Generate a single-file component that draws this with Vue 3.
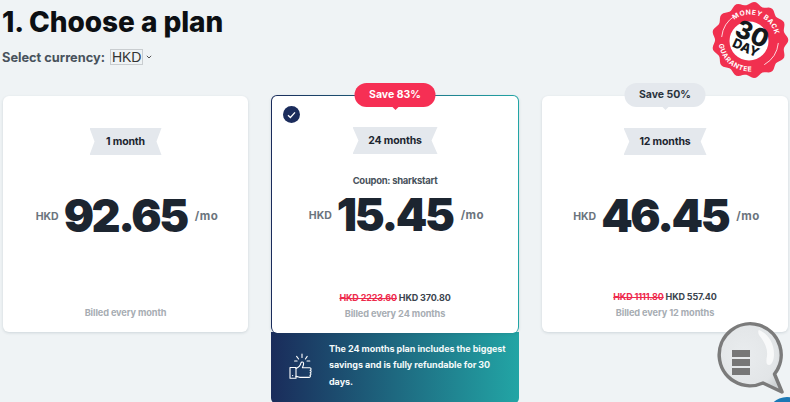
<script setup>
const plans = [
  { id: 1, term: '1 month', price: '92.65', billed: 'Billed every month' },
  { id: 2, term: '24 months', price: '15.45', billed: 'Billed every 24 months', save: 'Save 83%', coupon: 'Coupon: sharkstart', old: 'HKD 2223.60', now: 'HKD 370.80', selected: true },
  { id: 3, term: '12 months', price: '46.45', billed: 'Billed every 12 months', save: 'Save 50%', old: 'HKD 1111.80', now: 'HKD 557.40' }
]
const cx = 39, cy = 40
const pt = (r, deg) => {
  const a = (deg * Math.PI) / 180
  return (cx + r * Math.cos(a)).toFixed(2) + ' ' + (cy + r * Math.sin(a)).toFixed(2)
}
const arc = (r, from, to) => {
  const sweep = to > from ? 1 : 0
  const large = Math.abs(to - from) > 180 ? 1 : 0
  return `M${pt(r, from)}A${r} ${r} 0 ${large} ${sweep} ${pt(r, to)}`
}
let d = ''
for (let i = 0; i < 360; i += 3) {
  d += (i ? 'L' : 'M') + pt(36.6 + 1.7 * Math.cos((13 * i * Math.PI) / 180), i)
}
const sealPath = d + 'Z'
const topArc = arc(25.5, -128, 8)
const botArc = arc(31.5, 172, 55)
const lineA = arc(28.5, -174, -122)
const lineB = arc(28.5, 6, 60)
</script>

<template>
  <main class="page">
    <h1 class="title">1. Choose a plan</h1>
    <div class="currency">
      <span class="currency-label">Select currency:</span>
      <span class="currency-box">HKD</span>
      <svg class="chev" width="6" height="4" viewBox="0 0 6 4"><path d="M.8.8 3 3l2.2-2.2" fill="none" stroke="#555" stroke-width="1"/></svg>
    </div>

    <section class="plans">
      <article v-for="p in plans" :key="p.id" class="plan" :class="{ selected: p.selected }">
        <div class="card">
          <span v-if="p.save" class="save">{{ p.save }}</span>
          <span v-if="p.selected" class="check">
            <svg width="9" height="8" viewBox="0 0 9 8"><path d="M1 4.200 3.400 6.500 8 1.400" fill="none" stroke="#fff" stroke-width="1.300"/></svg>
          </span>
          <div class="ribbon"><span>{{ p.term }}</span></div>
          <div class="coupon">{{ p.coupon }}</div>
          <div class="price">
            <span class="cur">HKD</span>
            <span class="amount">{{ p.price }}</span>
            <span class="per">/mo</span>
          </div>
          <div class="bill">
            <div v-if="p.old" class="totals"><s>{{ p.old }}</s> {{ p.now }}</div>
            <div class="billed">{{ p.billed }}</div>
          </div>
        </div>
        <div v-if="p.selected" class="promo">
          <svg class="thumb" width="24" height="28" viewBox="0 0 24 28" fill="none" stroke="#fff" stroke-width="1.100" stroke-linecap="round" stroke-linejoin="round">
            <path d="M1 14.500h6v10.800H1z"/>
            <circle cx="3.600" cy="22.600" r=".7" fill="#fff" stroke="none"/>
            <path d="M7 15.500c2.500-1 4.400-3.200 5-5.600.3-1.300 2.500-1.100 2.600.6.1 1.600-.7 3.100-1.200 4.200h7.400c1.500 0 1.800 2.300.3 2.600 1.400.3 1.300 2.300 0 2.500 1.200.4 1 2.200-.2 2.400.9.5.6 2.200-.7 2.200h-8c-2 0-3-.9-5.200-1"/>
            <path d="M13 1v3.400M7.600 3.400 9.600 6M18.200 3.400 16.400 6M5.600 8h2.500M18 8h2.800"/>
          </svg>
          <p>The 24 months plan includes the biggest savings and is fully refundable for 30 days.</p>
        </div>
      </article>
    </section>

    <svg class="seal" width="80" height="80" viewBox="0 0 80 80" aria-label="Money back guarantee">
      <defs>
        <path id="arcTop" :d="topArc"/>
        <path id="arcBot" :d="botArc"/>
      </defs>
      <path :d="sealPath" fill="#f1304f"/>
      <path :d="lineA" fill="none" stroke="#fff" stroke-width=".8"/>
      <path :d="lineB" fill="none" stroke="#fff" stroke-width=".8"/>
      <circle cx="38" cy="41" r="19.500" fill="#fff"/>
      <text class="seal-arc"><textPath href="#arcTop">MONEY BACK</textPath></text>
      <text class="seal-arc"><textPath href="#arcBot">GUARANTEE</textPath></text>
      <g transform="rotate(24 38 41)">
        <text x="38" y="42" class="seal-30">30</text>
        <text x="38" y="53" class="seal-day">DAY</text>
      </g>
    </svg>

    <svg class="lens" width="70" height="74" viewBox="0 0 70 74">
      <defs>
        <radialGradient id="glass" cx=".4" cy=".45" r=".65">
          <stop offset="0" stop-color="#e9ecee"/>
          <stop offset=".8" stop-color="#e2e5e7"/>
          <stop offset="1" stop-color="#cfd3d5"/>
        </radialGradient>
      </defs>
      <path d="M46 62A31 31 0 1 1 57.500 53L65 71Z" fill="url(#glass)" stroke="#7b7b7b" stroke-width="3.500" stroke-linejoin="round"/>
      <path d="M42 9c9 4 15 13 15 24 0 6-2 11-5 11-3 0-3-4-2-9 1-8-3-15-8-21-1-2-1-5 0-5Z" fill="#fff" opacity=".75"/>
      <path d="M15 29h18v7H15zM15 38h18v7H15zM15 47h18v7H15z" fill="#777"/>
    </svg>
    <span class="corner"></span>
  </main>
</template>

<style>
html, body { margin: 0; background: #eff3f5; }
</style>

<style scoped>
.page {
  position: relative;
  width: 790px;
  height: 402px;
  overflow: hidden;
  box-sizing: border-box;
  padding: 4px 0 0 2px;
  background: #eff3f5;
  font-family: Inter, "Open Sans", sans-serif;
  color: #1c2530;
}
.title {
  margin: 0;
  font-size: 28px;
  line-height: 36px;
  font-weight: 800;
  letter-spacing: -.05px;
  color: #0c0f13;
}
.currency {
  display: flex;
  align-items: center;
  height: 20px;
  margin-top: 7px;
}
.currency-label { font-size: 12.800px; font-weight: 700; color: #48525c; }
.currency-box {
  margin-left: 5px;
  padding: 0 1px;
  border: 1px solid #c9cdd0;
  font: 14px/14px "Liberation Sans", sans-serif;
  color: #333;
}
.chev { margin-left: 3px; }
.plans {
  display: grid;
  grid-template-columns: 245px 248px 246px;
  column-gap: 23px;
  margin: 29px 0 0 1px;
  align-items: start;
}
.plan { position: relative; }
.card {
  position: relative;
  box-sizing: border-box;
  height: 236px;
  display: flex;
  flex-direction: column;
  align-items: center;
  background: #fff;
  border-radius: 6px;
  box-shadow: 0 1px 3px rgba(40, 60, 80, .16);
}
.selected { margin-top: -1px; }
.selected .card {
  height: 238px;
  border: 1.500px solid transparent;
  background: linear-gradient(#fff, #fff) padding-box, linear-gradient(90deg, #1a2c5b, #22a5a5) border-box;
  border-bottom: 0;
  margin-bottom: -1px;
  z-index: 1;
}
.save {
  position: absolute;
  top: -13px;
  left: 50%;
  transform: translateX(-50%);
  box-sizing: border-box;
  width: 81px;
  height: 24px;
  border-radius: 12px;
  background: #e4e8ed;
  border-color: #e4e8ed;
  color: #2a333d;
  font-size: 10.500px;
  font-weight: 700;
  line-height: 24px;
  text-align: center;
}
.selected .save { background: #f62f54; border-color: #f62f54; color: #fff; }
.save::after {
  content: "";
  position: absolute;
  left: 50%;
  bottom: -3px;
  margin-left: -3px;
  border: 3px solid transparent;
  border-top-color: inherit;
  border-bottom: 0;
}
.check {
  position: absolute;
  top: 10px;
  left: 10.500px;
  width: 17px;
  height: 17px;
  border-radius: 50%;
  background: #1b2c5c;
  display: flex;
  align-items: center;
  justify-content: center;
}
.ribbon {
  margin-top: 32px;
  width: 72px;
  height: 27px;
  background: #e4e8ed;
  clip-path: polygon(0 0, 100% 0, 93% 50%, 100% 100%, 0 100%, 7% 50%);
  display: flex;
  align-items: center;
  justify-content: center;
  font-size: 10.500px;
  font-weight: 700;
  letter-spacing: -.15px;
  color: #1c2530;
}
.selected .ribbon { width: 85px; margin-top: 31px; }
.plan:nth-child(3) .ribbon { width: 83px; }
.coupon {
  height: 14px;
  margin-top: 20px;
  font-size: 9.500px;
  line-height: 14px;
  font-weight: 700;
  letter-spacing: -.3px;
  color: #48525c;
}
.price {
  display: flex;
  align-items: center;
  height: 50px;
  margin-top: 2px;
  padding-left: 3px;
}
.cur { font-size: 10.500px; font-weight: 700; color: #6b747d; margin-right: 5px; }
.amount { font-size: 45px; line-height: 50px; font-weight: 900; letter-spacing: -2.400px; color: #1c2530; }
.per { font-size: 11.500px; font-weight: 700; letter-spacing: .5px; color: #6b747d; margin-left: 8px; }
.bill {
  margin-top: auto;
  padding-bottom: 11px;
  text-align: center;
  font-size: 9.200px;
  font-weight: 700;
  line-height: 16px;
  letter-spacing: -.1px;
}
.totals { color: #3b444e; font-size: 9px; letter-spacing: -.15px; }
.totals s { color: #ee2a4d; }
.billed { color: #a7adb3; }
.promo {
  display: flex;
  align-items: center;
  box-sizing: border-box;
  height: 72px;
  padding: 0 8px 5px 18px;
  gap: 16px;
  background: linear-gradient(90deg, #1a2c5b, #22a5a5);
  border-radius: 0 0 6px 6px;
  color: #f4fafa;
  font-size: 9px;
  font-weight: 700;
  letter-spacing: -.05px;
}
.thumb { flex: none; margin-top: 3px; }
.promo p { margin: 0; line-height: 16.500px; }
.seal { position: absolute; top: 0; left: 711px; }
.seal-arc { font-size: 6.800px; font-weight: 700; fill: #fff; letter-spacing: .5px; }
.seal-30 { font-size: 25px; font-weight: 800; fill: #14181d; text-anchor: middle; }
.seal-day { font-size: 13px; font-weight: 800; fill: #14181d; text-anchor: middle; }
.lens { position: absolute; left: 717px; top: 321px; }
.corner {
  position: absolute;
  left: 767px;
  top: 397px;
  width: 40px;
  height: 40px;
  border-radius: 50%;
  background: #1a78b5;
}
</style>
